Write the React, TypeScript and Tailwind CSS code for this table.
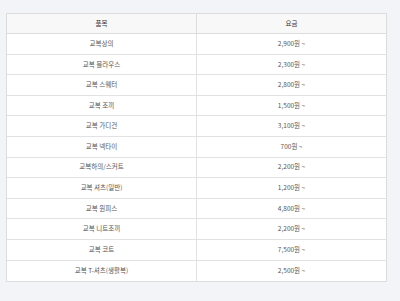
const rows: [string, string][] = [
  ['교복상의', '2,900원 ~'],
  ['교복 블라우스', '2,300원 ~'],
  ['교복 스웨터', '2,800원 ~'],
  ['교복 조끼', '1,500원 ~'],
  ['교복 가디건', '3,100원 ~'],
  ['교복 넥타이', '700원 ~'],
  ['교복하의/스커트', '2,200원 ~'],
  ['교복 셔츠(일반)', '1,200원 ~'],
  ['교복 원피스', '4,800원 ~'],
  ['교복 니트조끼', '2,200원 ~'],
  ['교복 코트', '7,500원 ~'],
  ['교복 T-셔츠(생활복)', '2,500원 ~'],
];

export default function App() {
  return (
    <div
      className="w-[400px] h-[301px] bg-[#f3f4f8] pt-[13px] pl-[6px]"
      style={{ fontFamily: '"Noto Sans CJK KR", "Noto Sans", sans-serif' }}
    >
      <div className="w-[381px] border border-[#dcdcdc] bg-white text-[6.5px] text-[#555]">
        {/* Header */}
        <div className="grid grid-cols-[190px_1fr] h-[20px] bg-[#f8f8f8] border-b border-[#dcdcdc]">
          <div className="flex items-center justify-center border-r border-[#dcdcdc] text-[#333]">품목</div>
          <div className="flex items-center justify-center text-[#333]">요금</div>
        </div>
        {rows.map(([name, price], i) => (
          <div
            key={name}
            className={
              'grid grid-cols-[190px_1fr] h-[20.6px] ' +
              (i < rows.length - 1 ? 'border-b border-[#e2e2e2]' : '')
            }
          >
            <div className="flex items-center justify-center border-r border-[#e2e2e2]">{name}</div>
            <div className="flex items-center justify-center">{price}</div>
          </div>
        ))}
      </div>
    </div>
  );
}
